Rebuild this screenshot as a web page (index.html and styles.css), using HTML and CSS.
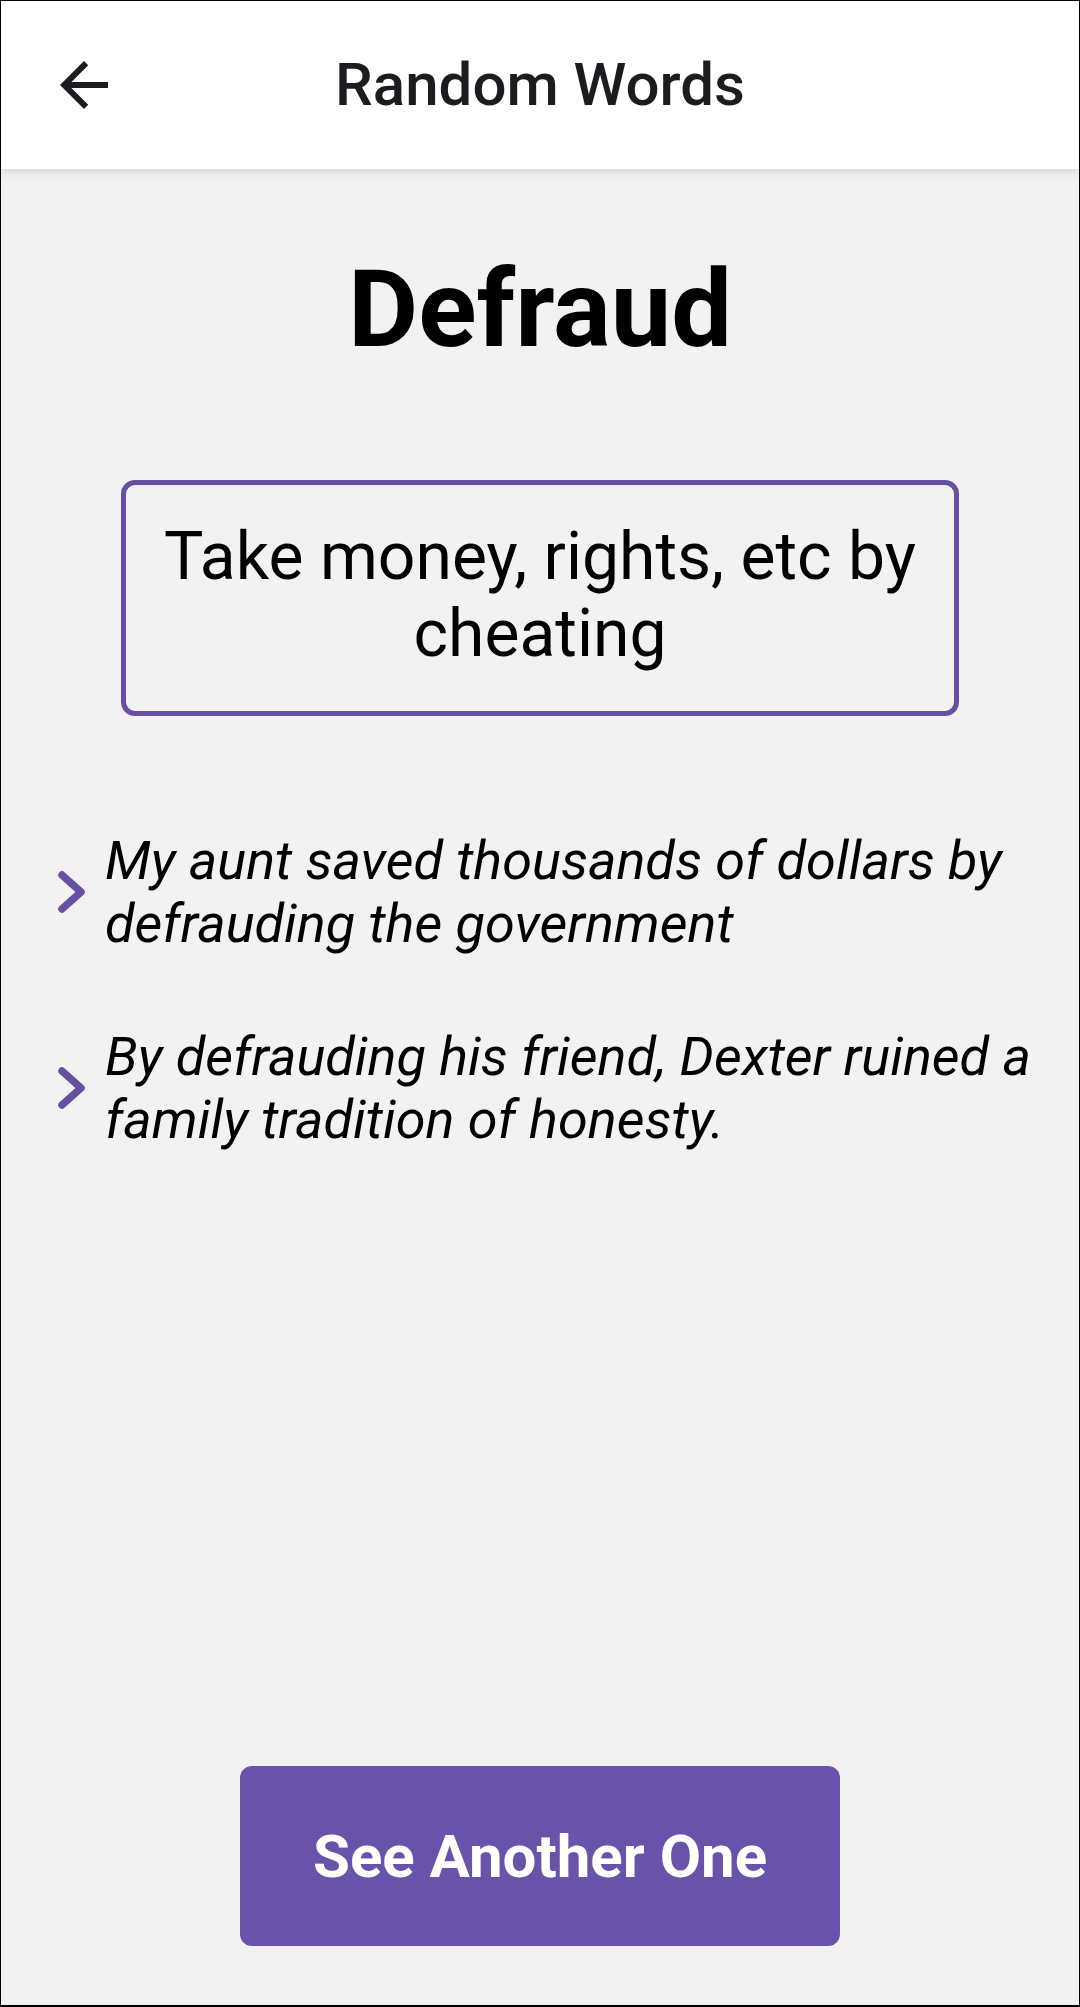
FILE: index.html
```html
<!DOCTYPE html>
<html lang="en">
<head>
<meta charset="utf-8">
<title>Random Words</title>
<link rel="stylesheet" href="styles.css">
</head>
<body>
<div class="screen">
  <header class="appbar">
    <button class="back" aria-label="Back">
      <svg viewBox="0 0 24 24" width="72" height="72"><path d="M20 11H7.83l5.59-5.59L12 4l-8 8 8 8 1.41-1.41L7.83 13H20v-2z" fill="#1c1b1f"/></svg>
    </button>
    <h1 class="appbar-title">Random Words</h1>
    <span class="appbar-spacer"></span>
  </header>
  <main class="content">
    <h2 class="word">Defraud</h2>
    <div class="definition">Take money, rights, etc by cheating</div>
    <ul class="examples">
      <li class="example">
        <svg class="chev" viewBox="0 0 48 48" width="48" height="48"><polyline points="14,7 33,24 14,41" fill="none" stroke="#6750a4" stroke-width="7.5" stroke-linecap="round" stroke-linejoin="round"/></svg>
        <p class="example-text">My aunt saved thousands of dollars by defrauding the government</p>
      </li>
      <li class="example">
        <svg class="chev" viewBox="0 0 48 48" width="48" height="48"><polyline points="14,7 33,24 14,41" fill="none" stroke="#6750a4" stroke-width="7.5" stroke-linecap="round" stroke-linejoin="round"/></svg>
        <p class="example-text">By defrauding his friend, Dexter ruined a family tradition of honesty.</p>
      </li>
    </ul>
  </main>
  <div class="actions">
    <button class="another">See Another One</button>
  </div>
</div>
</body>
</html>
```
FILE: styles.css
```css
html, body {
  margin: 0;
  padding: 0;
}
body {
  width: 1080px;
  height: 2007px;
  font-family: Roboto, "Noto Sans", sans-serif;
  background: #f2f2f2;
}
.screen {
  box-sizing: border-box;
  width: 1080px;
  height: 2007px;
  border: 1px solid #000;
  border-bottom-width: 2px;
  background: #f2f2f2;
  display: flex;
  flex-direction: column;
}
.appbar {
  height: 168px;
  flex: none;
  background: #fff;
  display: grid;
  grid-template-columns: 1fr auto 1fr;
  align-items: center;
  box-shadow: 0 3px 8px rgba(0, 0, 0, 0.12);
  position: relative;
  z-index: 1;
}
.back {
  justify-self: start;
  margin-left: 47px;
  width: 72px;
  height: 72px;
  padding: 0;
  border: 0;
  background: none;
  display: flex;
}
.appbar-title {
  margin: 0;
  font-size: 60px;
  font-weight: 500;
  color: #1c1b1f;
  line-height: 1;
  white-space: nowrap;
}
.content {
  padding-top: 77px;
  display: flex;
  flex-direction: column;
}
.word {
  margin: 0;
  text-align: center;
  font-size: 108px;
  font-weight: 700;
  line-height: normal;
  color: #000;
}
.definition {
  box-sizing: border-box;
  width: 838px;
  margin: 108px auto 0;
  border: 5px solid #6750a4;
  border-radius: 14px;
  padding: 33px 36px 39px;
  text-align: center;
  font-size: 66px;
  line-height: normal;
  color: #000;
}
.examples {
  list-style: none;
  margin: 113px 0 0;
  padding: 0 40px 0 47px;
  display: flex;
  flex-direction: column;
  gap: 70px;
}
.example {
  display: flex;
  align-items: center;
}
.chev {
  flex: none;
}
.example-text {
  margin: 0 0 0 9px;
  font-size: 54px;
  font-style: italic;
  line-height: normal;
  color: #000;
}
.actions {
  margin-top: auto;
  padding-bottom: 59px;
  display: flex;
  justify-content: center;
}
.another {
  width: 600px;
  height: 180px;
  border: 0;
  border-radius: 12px;
  background: #6952aa;
  color: #fff;
  font-family: Roboto, "Noto Sans", sans-serif;
  font-size: 60px;
  font-weight: 700;
}
```
